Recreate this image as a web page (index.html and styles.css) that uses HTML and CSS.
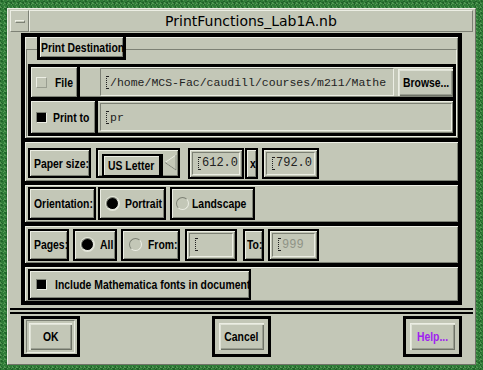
FILE: index.html
```html
<!DOCTYPE html>
<html lang="en">
<head>
    <meta charset="UTF-8">
    <title>PrintFunctions_Lab1A.nb</title>
    <link rel="stylesheet" href="styles.css">
</head>
<body>
    <div class="window">
        <div class="titlebar">
            <div class="menu-button"><span class="dash"></span></div>
            <div class="title">PrintFunctions_Lab1A.nb</div>
        </div>

        <div class="client">
            <div class="main">
                <div class="dialog">
                    <!-- Print destination -->
                    <div class="group">
                        <div class="group-label"><span class="t">Print Destination</span></div>
                        <div class="dest">
                            <div class="dest-row file-row">
                                <div class="toggle-col">
                                    <div class="toggle file"><span class="check"></span><span class="t">File</span></div>
                                </div>
                                <div class="field path"><span class="cursor"></span>/home/MCS-Fac/caudill/courses/m211/Mathe</div>
                                <div class="push browse"><span class="t">Browse...</span></div>
                            </div>
                            <div class="dest-row printer-row">
                                <div class="toggle-col">
                                    <div class="toggle printer"><span class="check on"></span><span class="t">Print to</span></div>
                                </div>
                                <div class="field printer-field"><span class="cursor"></span>pr</div>
                            </div>
                        </div>
                    </div>

                    <!-- Paper size -->
                    <div class="row paper-row">
                        <div class="cell label paper-label"><span class="t">Paper size:</span></div>
                        <div class="cell option-group">
                            <div class="option"><span class="t">US Letter</span></div>
                            <svg class="option-arrow" width="13" height="17" viewBox="0 0 13 17">
                                <polygon points="12,1 12,16 1,8.5" fill="#c3c7b7" stroke="#eceee4" stroke-width="1"/>
                                <polyline points="12,1 12,16 1,8.5" fill="none" stroke="#7d8175" stroke-width="1"/>
                            </svg>
                        </div>
                        <div class="cell entry width-entry"><div class="entry-field"><span class="cursor"></span>612.0</div></div>
                        <div class="cell times"><span class="t">x</span></div>
                        <div class="cell entry height-entry"><div class="entry-field"><span class="cursor"></span>792.0</div></div>
                    </div>

                    <!-- Orientation -->
                    <div class="row orient-row">
                        <div class="cell label orient-label"><span class="t">Orientation:</span></div>
                        <div class="cell choice portrait"><span class="radio on"></span><span class="t">Portrait</span></div>
                        <div class="cell choice landscape"><span class="radio"></span><span class="t">Landscape</span></div>
                    </div>

                    <!-- Pages -->
                    <div class="row pages-row">
                        <div class="cell label pages-label"><span class="t">Pages:</span></div>
                        <div class="cell choice all"><span class="radio on"></span><span class="t">All</span></div>
                        <div class="cell choice from"><span class="radio"></span><span class="t">From:</span></div>
                        <div class="cell entry from-entry"><div class="entry-field"><span class="cursor"></span></div></div>
                        <div class="cell label to-label"><span class="t">To:</span></div>
                        <div class="cell entry to-entry"><div class="entry-field dim"><span class="cursor"></span>999</div></div>
                    </div>

                    <!-- Fonts -->
                    <div class="row fonts-row">
                        <div class="cell choice fonts"><span class="check on"></span><span class="t">Include Mathematica fonts in document</span></div>
                    </div>
                </div>
            </div>

            <div class="separator"></div>

            <div class="actions">
                <div class="action">
                    <div class="default-frame"><div class="push"><span class="t mid">OK</span></div></div>
                </div>
                <div class="action">
                    <div class="push wide"><span class="t mid">Cancel</span></div>
                </div>
                <div class="action">
                    <div class="push wide help"><span class="t mid">Help...</span></div>
                </div>
            </div>
        </div>
    </div>
</body>
</html>
```

FILE: styles.css
```css
/* Motif print dialog */
* {
    margin: 0;
    padding: 0;
    box-sizing: border-box;
}

body {
    width: 483px;
    height: 370px;
    overflow: hidden;
    font-family: "Liberation Sans", Arial, sans-serif;
    font-size: 13px;
    font-weight: bold;
    color: #000;
    background-color: #2f7b37;
    background-image:
        linear-gradient(45deg, rgba(150, 210, 140, 0.35) 25%, transparent 25%, transparent 75%, rgba(150, 210, 140, 0.35) 75%),
        linear-gradient(45deg, rgba(10, 60, 20, 0.4) 25%, transparent 25%, transparent 75%, rgba(10, 60, 20, 0.4) 75%);
    background-size: 4px 4px, 6px 6px;
    background-position: 0 0, 1px 2px;
}

/* narrow bold label text */
.t {
    display: inline-block;
    white-space: nowrap;
    transform: scaleX(0.8);
    transform-origin: left center;
}

.t.mid {
    transform-origin: center center;
}

.window {
    width: 469px;
    height: 357px;
    margin: 8px 0 0 7px;
    display: flex;
    flex-direction: column;
    background-color: #c3c7b7;
    border: 1px solid;
    border-color: #eceee4 #6f7367 #6f7367 #eceee4;
    padding: 1px 2px 2px 2px;
}

/* Title bar */
.titlebar {
    height: 22px;
    display: flex;
}

.menu-button {
    width: 19px;
    display: flex;
    align-items: center;
    justify-content: center;
    border: 1px solid;
    border-color: #eceee4 #7d8175 #7d8175 #eceee4;
}

.dash {
    width: 10px;
    height: 3px;
    border: 1px solid;
    border-color: #eceee4 #7d8175 #7d8175 #eceee4;
}

.title {
    flex: 1;
    text-align: center;
    font-family: "DejaVu Sans", sans-serif;
    font-weight: normal;
    font-size: 14px;
    line-height: 20px;
    border: 1px solid;
    border-color: #eceee4 #7d8175 #7d8175 #eceee4;
}

.client {
    flex: 1;
    display: flex;
    flex-direction: column;
}

.main {
    padding: 1px 11px 0 11px;
}

.dialog {
    height: 272px;
    border: 4px solid #000;
    background-color: #000;
    display: flex;
    flex-direction: column;
    gap: 4px;
}

/* shared bevels */
.group,
.row,
.dest-row,
.toggle,
.cell,
.push,
.group-label {
    background-color: #c3c7b7;
    box-shadow: inset 1px 1px 0 #eceee4, inset -1px -1px 0 #7d8175;
}

/* Print destination group */
.group {
    height: 101px;
    position: relative;
    padding-left: 3px;
}

.group::before {
    content: "";
    position: absolute;
    left: 1px;
    top: 12px;
    right: 1px;
    bottom: 1px;
    border: 1px solid;
    border-color: #7d8175 #eceee4 #eceee4 #7d8175;
}

.group-label {
    position: relative;
    margin-left: 9px;
    width: 89px;
    height: 23px;
    border: 3px solid #000;
    border-top: none;
    display: flex;
    align-items: center;
    padding-left: 1px;
    overflow: hidden;
}

.dest {
    position: relative;
    margin: 4px 2px 0 0;
    border: 3px solid #000;
    background-color: #000;
    display: flex;
    flex-direction: column;
    gap: 4px;
}

.dest-row {
    display: flex;
    align-items: center;
}

.file-row {
    height: 30px;
}

.printer-row {
    height: 32px;
}

.toggle-col {
    width: 68px;
    align-self: stretch;
    display: flex;
}

.toggle {
    display: flex;
    align-items: center;
    gap: 8px;
    padding-left: 5px;
    border-right: 3px solid #000;
    overflow: hidden;
}

.toggle.file {
    width: 49px;
}

.toggle.printer {
    width: 67px;
    gap: 6px;
}

.field {
    height: 28px;
    display: flex;
    align-items: center;
    padding-left: 5px;
    font-family: "Liberation Mono", monospace;
    font-weight: normal;
    font-size: 11.5px;
    color: #222;
    border: 1px solid;
    border-color: #7d8175 #eceee4 #eceee4 #7d8175;
    white-space: nowrap;
    overflow: hidden;
}

.path {
    width: 294px;
    margin-left: 1px;
}

.printer-field {
    flex: 1;
    margin: 0 1px 0 1px;
}

.cursor {
    width: 3px;
    height: 13px;
    margin-right: 1px;
    border-left: 1px dotted #222;
    border-top: 1px solid #222;
    border-bottom: 1px solid #222;
}

.push {
    display: flex;
    align-items: center;
    justify-content: center;
    overflow: hidden;
    box-shadow: inset 1px 1px 0 #eceee4, inset 2px 2px 0 #dfe2d6, inset -1px -1px 0 #6f7367, inset -2px -2px 0 #9a9e91;
}

.browse {
    width: 55px;
    height: 27px;
    margin-left: 4px;
    justify-content: flex-start;
    padding-left: 5px;
}

/* Checkboxes and radios */
.check {
    width: 11px;
    height: 11px;
    flex: none;
    border: 1px solid;
    border-color: #eceee4 #9a9e91 #9a9e91 #eceee4;
}

.check.on {
    background-color: #000;
    border-color: #7d8175 #eceee4 #eceee4 #7d8175;
}

.radio {
    width: 13px;
    height: 13px;
    flex: none;
    border-radius: 50%;
    border: 1px solid;
    border-color: #7d8175 #eceee4 #eceee4 #7d8175;
}

.radio.on {
    background-color: #000;
    box-shadow: 0 0 0 1px #e4e7da;
}

/* Rows */
.row {
    display: flex;
    align-items: center;
    padding-left: 3px;
}

.paper-row {
    height: 39px;
    padding-top: 3px;
}

.orient-row,
.pages-row {
    height: 37px;
}

.fonts-row {
    height: 34px;
}

.cell {
    border: 2px solid #000;
    display: flex;
    align-items: center;
    padding: 0 4px;
    flex: none;
    overflow: hidden;
}

.paper-label {
    width: 63px;
    height: 30px;
}

.option-group {
    width: 84px;
    height: 30px;
    margin-left: 5px;
    padding: 0 0 0 4px;
    gap: 0;
    overflow: visible;
}

.option {
    width: 61px;
    height: 23px;
    margin-top: 4px;
    padding-left: 4px;
    display: flex;
    align-items: center;
    border: 2px solid #000;
    border-right-width: 4px;
    box-shadow: inset 1px 1px 0 #eceee4;
    overflow: hidden;
}

.option-arrow {
    margin: -2px 0 0 1px;
}

.entry {
    height: 31px;
    padding: 2px;
}

.entry-field {
    width: 100%;
    height: 100%;
    display: flex;
    align-items: center;
    padding-left: 5px;
    font-family: "Liberation Mono", monospace;
    font-weight: normal;
    font-size: 12px;
    color: #222;
    border: 1px solid;
    border-color: #7d8175 #eceee4 #eceee4 #7d8175;
}

.entry-field.dim {
    color: #8f9386;
}

.width-entry {
    width: 56px;
    margin-left: 8px;
}

.times {
    width: 13px;
    height: 31px;
    margin-left: 1px;
    padding: 0 3px;
}

.height-entry {
    width: 57px;
    margin-left: 4px;
}

.orient-label {
    width: 68px;
    height: 33px;
}

.choice {
    gap: 6px;
    padding-left: 6px;
}

.portrait {
    width: 68px;
    height: 33px;
    margin-left: 2px;
}

.landscape {
    width: 85px;
    height: 33px;
    margin-left: 4px;
    padding-left: 4px;
    gap: 3px;
}

.pages-label {
    width: 41px;
    height: 32px;
}

.all {
    width: 44px;
    height: 32px;
    margin-left: 4px;
}

.from {
    width: 59px;
    height: 32px;
    margin-left: 4px;
}

.from-entry {
    width: 52px;
    height: 32px;
    margin-left: 5px;
}

.to-label {
    width: 21px;
    height: 32px;
    margin-left: 6px;
    padding: 0 2px;
}

.to-entry {
    width: 51px;
    height: 32px;
    margin-left: 4px;
}

.fonts {
    width: 223px;
    height: 31px;
    gap: 8px;
}

/* Bottom buttons */
.separator {
    margin-top: 3px;
    height: 6px;
    border-top: 2px solid #000;
    border-bottom: 2px solid #000;
    background-color: #c3c7b7;
}

.actions {
    display: flex;
    justify-content: space-between;
    padding: 2px 11px 0 11px;
}

.action {
    width: 59px;
    height: 41px;
    border: 3px solid #000;
    display: flex;
    align-items: center;
    justify-content: center;
}

.default-frame {
    width: 49px;
    height: 33px;
    padding: 2px;
    border: 1px solid;
    border-color: #7d8175 #eceee4 #eceee4 #7d8175;
}

.default-frame .push {
    width: 100%;
    height: 100%;
}

.push.wide {
    width: 45px;
    height: 27px;
}

.help {
    color: #a020f0;
}
```
